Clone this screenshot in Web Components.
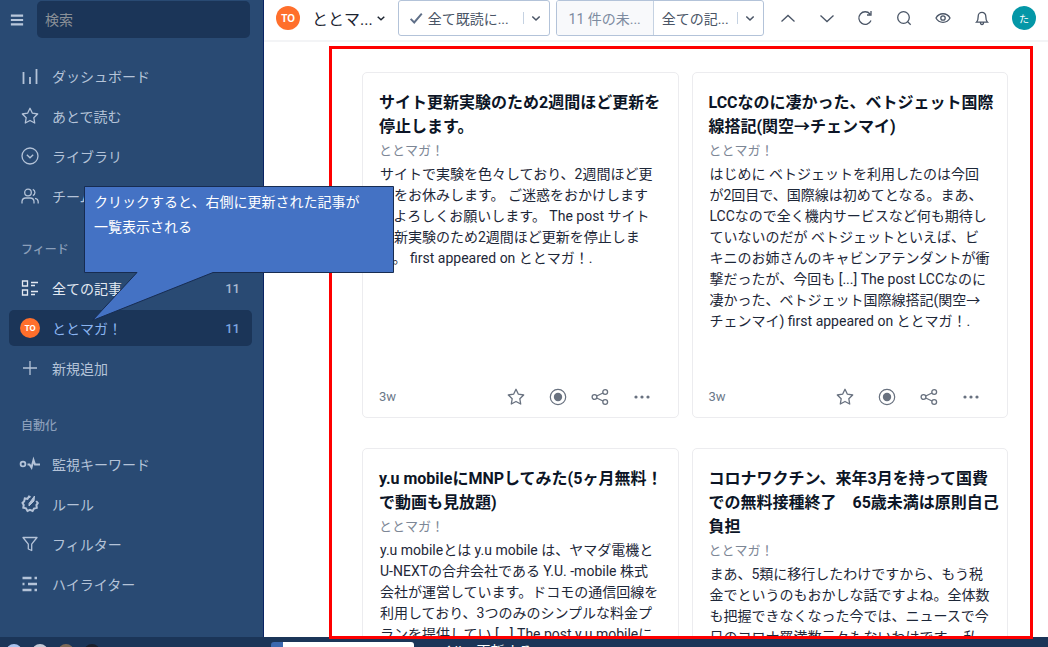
<!DOCTYPE html>
<html lang="ja">
<head>
<meta charset="utf-8">
<title>ととマガ！</title>
<style>
html, body { margin: 0; height: 100%; }
body { font-family: Roboto, "Noto Sans CJK JP", sans-serif; font-size: 14px; color: #101a2e; overflow: hidden; }
</style>
</head>
<body>
<reader-app></reader-app>
<script>
const ICONS = {
  menu: '<path d="M1 3h14M1 8h14M1 13h14" stroke-width="2.4"/>',
  bars: '<path d="M2.500 5v12M9 10v7M15.500 2v15" stroke-width="1.8"/>',
  star: '<path d="M9 1.300l2.400 4.900 5.300.8-3.900 3.700.9 5.300L9 13.500l-4.700 2.500.9-5.300L1.300 7l5.300-.8z" stroke-linejoin="round"/>',
  library: '<circle cx="9" cy="9" r="8"/><path d="M5.800 7.700L9 10.800l3.200-3.100"/>',
  team: '<circle cx="7" cy="5.500" r="3.300"/><path d="M1 16.500v-2a3.800 3.800 0 0 1 3.800-3.500h4.400a3.800 3.800 0 0 1 3.800 3.500v2M11.800 2.300a3.400 3.400 0 0 1 0 6.300M14 11.300a3.600 3.600 0 0 1 3.200 3.500v1.700"/>',
  list: '<path d="M1.500 2h5v5h-5zM1.500 11h5v5h-5zM10 3.500h7M10 6.500h4M10 12.500h7M10 15.500h4"/>',
  plus: '<path d="M9 2v14M2 9h14"/>',
  monitor: '<circle cx="2" cy="9" r="2.400" stroke-width="1.800"/><path d="M6.500 9.500h2l2 3L12.500 5l1.500 4.500h5" stroke-width="2"/>',
  rules: '<path d="M9.500 2.200L8 1.500 6.500 3.800l-2.700-.4-.6 2.800L1.500 8l1.200 2-.4 2.800 2.700.5L6.500 16 9 14.800l2.600 1.200 1.400-2.400 2.800-.8-.4-2.700L16.800 8 15.200 6" stroke-width="2"/><path d="M13.500 1L8 8.500 8 11l5-5z" fill="currentColor" stroke-width="1"/>',
  filter: '<path d="M2 2.500h14l-5.300 6.700v6.300l-3.400-1.500V9.200z" stroke-linejoin="round"/>',
  highlight: '<path d="M1.500 3h9M13.500 3h2.500M1.500 9h2M7 9h9M1.500 15h9M13.500 15h2.500" stroke-width="2.400"/>',
  check: '<path d="M3 10l4 4 8.500-10" stroke-width="2.200"/>',
  down: '<path d="M5.300 7.500l3.700 3.500 3.700-3.500" stroke-width="1.600"/>',
  bigup: '<path d="M2.500 12.500L9 6.500l6.500 6"/>',
  bigdown: '<path d="M2.500 6.500l6.500 6 6.500-6"/>',
  refresh: '<path d="M15 11.500A6.300 6.300 0 1 1 14 5M15 2v4h-4"/>',
  search: '<circle cx="8.500" cy="8.500" r="5.800"/><path d="M12.700 12.700l3 3"/>',
  eye: '<path d="M2 9C5 3.300 13 3.300 16 9 13 14.700 5 14.700 2 9z"/><circle cx="9" cy="9" r="2.200"/>',
  bell: '<path d="M3.500 13.200h11c-1.800-1.800-1.700-3.200-1.700-6a3.800 3.800 0 0 0-7.600 0c0 2.800.1 4.200-1.700 6zM7.500 13.500c0 2.800 3 2.800 3 0"/>',
  record: '<circle cx="9" cy="9" r="7.700" stroke-width="1.200"/><circle cx="9" cy="9" r="4.200" fill="currentColor" stroke="none"/>',
  share: '<circle cx="3.500" cy="9" r="2.400"/><circle cx="14.200" cy="4" r="2.400"/><circle cx="14.200" cy="14" r="2.400"/><path d="M5.700 8l6.300-3M5.700 10l6.300 3"/>',
  more: '<g fill="currentColor" stroke="none"><circle cx="3" cy="9" r="1.600"/><circle cx="9" cy="9" r="1.600"/><circle cx="15" cy="9" r="1.600"/></g>'
};

function define(name, render) {
  customElements.define(name, class extends HTMLElement {
    connectedCallback() {
      if (!this.shadowRoot) this.attachShadow({ mode: 'open' }).innerHTML = render(this);
    }
  });
}

define('ui-icon', el => `
<style>
:host { display: block; width: 18px; height: 18px; flex: none; }
svg { display: block; width: 100%; height: 100%; overflow: visible; }
</style>
<svg viewBox="0 0 ${el.getAttribute('name') === 'menu' ? 16 : 18} ${el.getAttribute('name') === 'menu' ? 16 : 18}" fill="none" stroke="currentColor" stroke-width="1.3" aria-hidden="true">${ICONS[el.getAttribute('name')]}</svg>`);

define('feed-badge', () => `
<style>
:host { display: flex; align-items: center; justify-content: center; flex: none; border-radius: 50%;
  width: var(--badge, 20px); height: var(--badge, 20px); background: #ff6f2c; color: #fff;
  font: 700 var(--badge-text, 8px)/1 Inter, sans-serif; }
</style><slot></slot>`);

define('nav-item', el => `
<style>
:host { display: block; }
a { display: flex; align-items: center; height: 36px; padding: 0 12px 0 11px; gap: 12px; border-radius: 5px;
  color: #b4c3d8; text-decoration: none; }
:host([bright]) a { color: #e3e9f2; }
:host([selected]) a { background: #1b3558; color: #8ab4f0; }
.lead { display: flex; width: 20px; justify-content: center; flex: none; }
.label { flex: 1; white-space: nowrap; }
.count { font-size: 13px; font-weight: 500; color: #a9bad2; }
:host([selected]) .count { color: #7ea6e0; }
</style>
<a href="#"><span class="lead">${el.hasAttribute('icon') ? `<ui-icon name="${el.getAttribute('icon')}"></ui-icon>` : '<feed-badge>TO</feed-badge>'}</span>
<span class="label"><slot></slot></span>${el.hasAttribute('count') ? `<span class="count">${el.getAttribute('count')}</span>` : ''}</a>`);

define('nav-group', el => `
<style>
:host { display: block; }
h2 { margin: 0 0 0 12px; font-size: 12px; font-weight: 500; line-height: 20px; color: #8b9fba; }
div { display: flex; flex-direction: column; gap: 4px; }
h2 + div { padding-top: 10px; }
</style>
${el.hasAttribute('heading') ? `<h2>${el.getAttribute('heading')}</h2>` : ''}<div><slot></slot></div>`);

define('side-bar', () => `
<style>
:host { display: flex; flex-direction: column; box-sizing: border-box; background: #294a73; border-right: 1px solid #0a2463; overflow: hidden; }
.top { display: flex; align-items: center; gap: 12px; padding: 1px 13px 0 9px; }
button { border: 0; background: none; padding: 0; color: #b9c8dc; display: flex; }
button ui-icon { width: 14px; height: 14px; margin: 0 1px; }
input { flex: 1; min-width: 0; box-sizing: border-box; height: 37px; border: 0; border-radius: 5px; background: #1b3558;
  color: #fff; font: inherit; padding: 0 8px; outline: 0; }
input::placeholder { color: #8a9097; opacity: 1; }
nav { display: flex; flex-direction: column; gap: 26px; padding: 20px 11px 0 9px; }
nav-group:last-child { padding-top: 4px; }
</style>
<div class="top"><button aria-label="メニュー"><ui-icon name="menu"></ui-icon></button><input type="search" aria-label="検索" placeholder="検索"></div>
<nav>
<nav-group>
<nav-item icon="bars">ダッシュボード</nav-item><nav-item icon="star">あとで読む</nav-item><nav-item icon="library">ライブラリ</nav-item><nav-item icon="team">チーム</nav-item>
</nav-group>
<nav-group heading="フィード">
<nav-item icon="list" bright count="11">全ての記事</nav-item><nav-item selected count="11">ととマガ！</nav-item><nav-item icon="plus">新規追加</nav-item>
</nav-group>
<nav-group heading="自動化">
<nav-item icon="monitor">監視キーワード</nav-item><nav-item icon="rules">ルール</nav-item><nav-item icon="filter">フィルター</nav-item><nav-item icon="highlight">ハイライター</nav-item>
</nav-group>
</nav>`);

define('top-bar', () => `
<style>
:host { display: flex; align-items: center; box-sizing: border-box; height: 42px; padding: 0 12px 4px; background: #fff; border-bottom: 2px solid #f3f4f6; color: #4a5566; }
button { display: flex; align-items: center; border: 0; background: none; padding: 0; font: inherit; color: inherit; white-space: nowrap; }
feed-badge { --badge: 24px; --badge-text: 10px; }
.feed { font-size: 16px; color: #1c2430; margin-left: 12px; }
.feed ui-icon { width: 16px; height: 16px; margin-right: -2px; }
.split { display: flex; box-sizing: border-box; height: 36px; border: 1px solid #b3c3d9; border-radius: 3px; margin-left: 6px; overflow: hidden; }
.split button { padding: 0 8px; }
.split.first { margin-left: 11px; }
.first .main { width: 124px; gap: 4px; }
.first ui-icon[name=check] { width: 16px; height: 16px; color: #5f6f88; margin-left: 1px; }
.unread { background: #f8f9fb; color: #7d8ba0; width: 97px; justify-content: center; border-right: 1px solid #c5d2e2; }
.all { width: 83px; }
.split .arrow { position: relative; flex: none; padding: 0 4px; }
.arrow::before { content: ""; position: absolute; left: 0; top: 11px; height: 12px; border-left: 1px solid #c5d2e2; }
.tools { flex: 1; display: flex; justify-content: space-between; align-items: center; padding-left: 15px; }
.user { width: 24px; height: 24px; border-radius: 50%; background: #0497a7; color: #fff; font-size: 10px; justify-content: center; }
</style>
<feed-badge>TO</feed-badge>
<button class="feed">ととマ...<ui-icon name="down"></ui-icon></button>
<div class="split first"><button class="main"><ui-icon name="check"></ui-icon>全て既読に...</button><button class="arrow" aria-label="既読オプション"><ui-icon name="down"></ui-icon></button></div>
<div class="split"><button class="unread">11 件の未...</button><button class="all">全ての記...</button><button class="arrow" aria-label="表示オプション"><ui-icon name="down"></ui-icon></button></div>
<div class="tools">
<button aria-label="前へ"><ui-icon name="bigup"></ui-icon></button><button aria-label="次へ"><ui-icon name="bigdown"></ui-icon></button><button aria-label="更新"><ui-icon name="refresh"></ui-icon></button><button aria-label="検索"><ui-icon name="search"></ui-icon></button><button aria-label="表示"><ui-icon name="eye"></ui-icon></button><button aria-label="通知"><ui-icon name="bell"></ui-icon></button><button class="user">た</button>
</div>`);

define('article-card', el => `
<style>
:host { display: flex; flex-direction: column; box-sizing: border-box; min-height: 346px; padding: 18px 8px 8px 16px; border: 1px solid #ececef; border-radius: 5px; background: #fff; }
h3 { margin: 0; font-size: 16px; font-weight: 700; line-height: 24px; color: #0c1526; white-space: nowrap; }
.source { font-size: 13px; line-height: 24px; color: #7d8796; }
p { margin: 1px 0 0 1px; flex: 1; line-height: 21px; color: #1d2738; white-space: nowrap; }
footer { display: flex; align-items: center; gap: 24px; padding-right: 19px; font-size: 13px; line-height: 24px; color: #6b7889; }
time { flex: 1; }
button { display: flex; border: 0; background: none; padding: 0; color: #68717f; }
</style>
<h3><slot name="title"></slot></h3><div class="source">ととマガ！</div><p><slot></slot></p>
<footer><time>3w</time><button aria-label="あとで読む"><ui-icon name="star"></ui-icon></button><button aria-label="既読"><ui-icon name="record"></ui-icon></button><button aria-label="共有"><ui-icon name="share"></ui-icon></button><button aria-label="その他"><ui-icon name="more"></ui-icon></button></footer>`);

define('article-grid', () => `
<style>
:host { display: grid; grid-template-columns: 1fr 1fr; gap: 30px 13px; padding: 30px 40px 0 98px; }
</style><slot></slot>`);

define('callout-note', () => `
<style>
:host { position: absolute; left: 84px; top: 186px; width: 310px; height: 135px; color: #fff; }
svg { position: absolute; inset: 0; overflow: visible; }
p { position: relative; margin: 0; padding: 3px 10px; line-height: 25px; font-family: "Noto Sans CJK JP", sans-serif; font-size: 14px; white-space: nowrap; }
</style>
<svg width="310" height="135" aria-hidden="true"><path d="M.500.500H309.500V86.500H129L8.500 134.500 53 86.500H.500z" fill="#4472c4" stroke="#172c51"/></svg>
<p><slot></slot></p>`);

define('task-bar', () => `
<style>
:host { display: flex; box-sizing: border-box; height: 10px; background: #1b3558; overflow: hidden; color: #fff; }
.dots { display: flex; gap: 10px; width: 266px; padding: 7px 0 0 6px; box-sizing: border-box; flex: none; }
.dots i { width: 16px; height: 16px; border-radius: 50%; background: #a9c3ee; flex: none; }
.dots i:nth-child(2) { background: #c4c9d6; }
.dots i:nth-child(3) { background: #7d6a58; }
.dots i:nth-child(4) { background: #1a1f2b; }
.tab { width: 131px; height: 12px; margin: 5px 0 0 5px; border-left: 12px solid #3b68ae; background: #fff; border-radius: 3px 3px 0 0; flex: none; }
span { padding-left: 24px; font-size: 14px; line-height: 28px; white-space: pre; }
</style>
<div class="dots"><i></i><i></i><i></i><i></i></div><div class="tab"></div><span>イル   更新する</span>`);

define('reader-app', () => `
<style>
:host { position: relative; display: grid; grid-template: minmax(0, 1fr) auto / 264px minmax(0, 1fr); height: 100vh; overflow: hidden; background: #fff; }
main { position: relative; min-width: 0; overflow: hidden; }
.frame { position: absolute; top: 46px; right: 15px; bottom: -2px; left: 65px; border: 3px solid #fe0000; pointer-events: none; }
main { overflow: visible; clip-path: inset(0 0 -2px 0); z-index: 1; }
.scroll { height: 100%; overflow: hidden; }
task-bar { grid-column: 1 / -1; }
callout-note { z-index: 2; }
</style>
<side-bar></side-bar>
<main><div class="scroll"><top-bar></top-bar>
<article-grid>
<article-card><span slot="title">サイト更新実験のため2週間ほど更新を<br>停止します。</span>サイトで実験を色々しており、2週間ほど更<br>新をお休みします。 ご迷惑をおかけします<br>がよろしくお願いします。 The post サイト<br>更新実験のため2週間ほど更新を停止しま<br>す。 first appeared on ととマガ！.</article-card>
<article-card><span slot="title">LCCなのに凄かった、ベトジェット国際<br>線搭記(関空→チェンマイ)</span>はじめに ベトジェットを利用したのは今回<br>が2回目で、国際線は初めてとなる。まあ、<br>LCCなので全く機内サービスなど何も期待し<br>ていないのだが ベトジェットといえば、ビ<br>キニのお姉さんのキャビンアテンダントが衝<br>撃だったが、今回も [...] The post LCCなのに<br>凄かった、ベトジェット国際線搭記(関空→<br>チェンマイ) first appeared on ととマガ！.</article-card>
<article-card><span slot="title">y.u mobileにMNPしてみた(5ヶ月無料！<br>で動画も見放題)</span>y.u mobileとは y.u mobile は、ヤマダ電機と<br>U-NEXTの合弁会社である Y.U. -mobile 株式<br>会社が運営しています。ドコモの通信回線を<br>利用しており、3つのみのシンプルな料金プ<br>ランを提供してい [...] The post y.u mobileに</article-card>
<article-card><span slot="title">コロナワクチン、来年3月を持って国費<br>での無料接種終了　65歳未満は原則自己<br>負担</span>まあ、5類に移行したわけですから、もう税<br>金でというのもおかしな話ですよね。全体数<br>も把握できなくなった今では、ニュースで今<br>日のコロナ羅満数云々もないわけです。 私</article-card>
</article-grid></div>
<div class="frame"></div></main>
<task-bar></task-bar>
<callout-note>クリックすると、右側に更新された記事が<br>一覧表示される</callout-note>`);
</script>
</body>
</html>
